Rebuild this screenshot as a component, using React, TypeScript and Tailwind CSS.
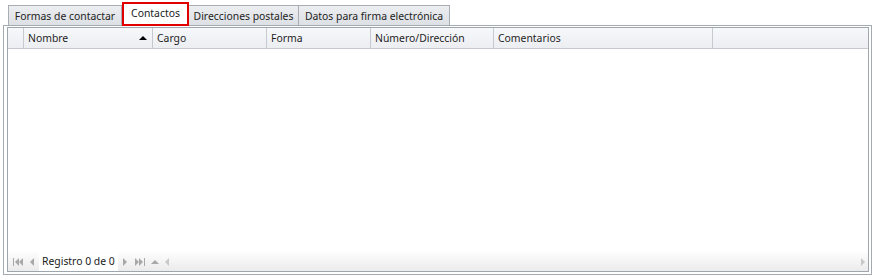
import React from 'react';

const tabs = [
  { label: 'Formas de contactar', w: 'w-[114px]' },
  { label: 'Contactos', w: 'w-[67px]', active: true },
  { label: 'Direcciones postales', w: 'w-[111px]' },
  { label: 'Datos para firma electrónica', w: 'w-[152px]' },
];

const columns = [
  { label: '', w: 'w-[16px]' },
  { label: 'Nombre', w: 'w-[129px]', sorted: true },
  { label: 'Cargo', w: 'w-[114px]' },
  { label: 'Forma', w: 'w-[104px]' },
  { label: 'Número/Dirección', w: 'w-[123px]' },
  { label: 'Comentarios', w: 'w-[219px]' },
];

const Tri = ({ dir, className }: { dir: 'l' | 'r' | 'u'; className?: string }) => {
  const pts = dir === 'l' ? '5,0 5,8 1,4' : dir === 'r' ? '1,0 1,8 5,4' : '0,6 8,6 4,2';
  return (
    <svg width={dir === 'u' ? 8 : 6} height={8} viewBox={dir === 'u' ? '0 0 8 8' : '0 0 6 8'} className={className}>
      <polygon points={pts} fill="currentColor" />
    </svg>
  );
};

export default function App() {
  return (
    <div className="w-[872px] h-[275px] bg-white text-[10.4px] leading-none text-[#1a1a1a] font-['Noto_Sans',sans-serif] overflow-hidden whitespace-nowrap">
      {/* Tabs */}
      <div className="flex items-end h-[25px] pl-[8px]">
        {tabs.map((t) =>
          t.active ? (
            <div
              key={t.label}
              className={`${t.w} h-[24px] -mb-[1px] relative z-10 bg-white border-2 border-[#e00000] flex items-center justify-center pb-[2px]`}
            >
              {t.label}
            </div>
          ) : (
            <div
              key={t.label}
              className={`${t.w} h-[20px] bg-gradient-to-b from-[#eceef1] to-[#dde0e4] border border-b-0 border-[#a9aeb5] flex items-center justify-center pt-[1px] text-[#222] -ml-[1px] first:ml-0`}
            >
              {t.label}
            </div>
          )
        )}
      </div>

      {/* Panel */}
      <div className="ml-[3px] w-[869px] h-[250px] border border-[#a4aab2] pt-[1px] pl-[3px] pr-[2px] pb-[2px] flex">
        <div className="flex-1 border border-[#a0a6ae] flex flex-col">
          {/* Header */}
          <div className="flex h-[21px] border-b border-[#c6cad0] bg-gradient-to-b from-[#f7f8fa] to-[#eceef2]">
            {columns.map((c) => (
              <div
                key={c.label || 'ind'}
                className={`${c.w} border-r border-[#c6cad0] flex items-center pl-[4px] pr-[5px] text-[#1e1e1e]`}
              >
                <span className="flex-1">{c.label}</span>
                {c.sorted && <Tri dir="u" className="text-black" />}
              </div>
            ))}
            <div className="flex-1" />
          </div>

          {/* Body */}
          <div className="flex-1 bg-white" />

          {/* Footer navigator */}
          <div className="h-[19px] flex items-center bg-gradient-to-b from-[#fdfdfd] to-[#ebebeb] text-[#a8a8a8]">
            <div className="flex items-center pl-[3px]">
              <div className="flex items-center w-[14px] justify-center">
                <div className="w-[1px] h-[8px] bg-current" />
                <Tri dir="l" />
                <Tri dir="l" className="-ml-[2px]" />
              </div>
              <div className="w-[14px] flex justify-center">
                <Tri dir="l" />
              </div>
              <div className="bg-white h-[18px] flex items-center px-[3px] text-[#1a1a1a]">Registro 0 de 0</div>
              <div className="w-[14px] flex justify-center">
                <Tri dir="r" />
              </div>
              <div className="flex items-center w-[16px] justify-center">
                <Tri dir="r" />
                <Tri dir="r" className="-ml-[2px]" />
                <div className="w-[1px] h-[8px] bg-current" />
              </div>
              <div className="w-[14px] flex justify-center">
                <Tri dir="u" />
              </div>
            </div>
            <div className="flex-1 flex items-center justify-between pl-[2px] pr-[2px] text-[#c8c8c8]">
              <Tri dir="l" />
              <Tri dir="r" />
            </div>
          </div>
        </div>
      </div>
    </div>
  );
}
